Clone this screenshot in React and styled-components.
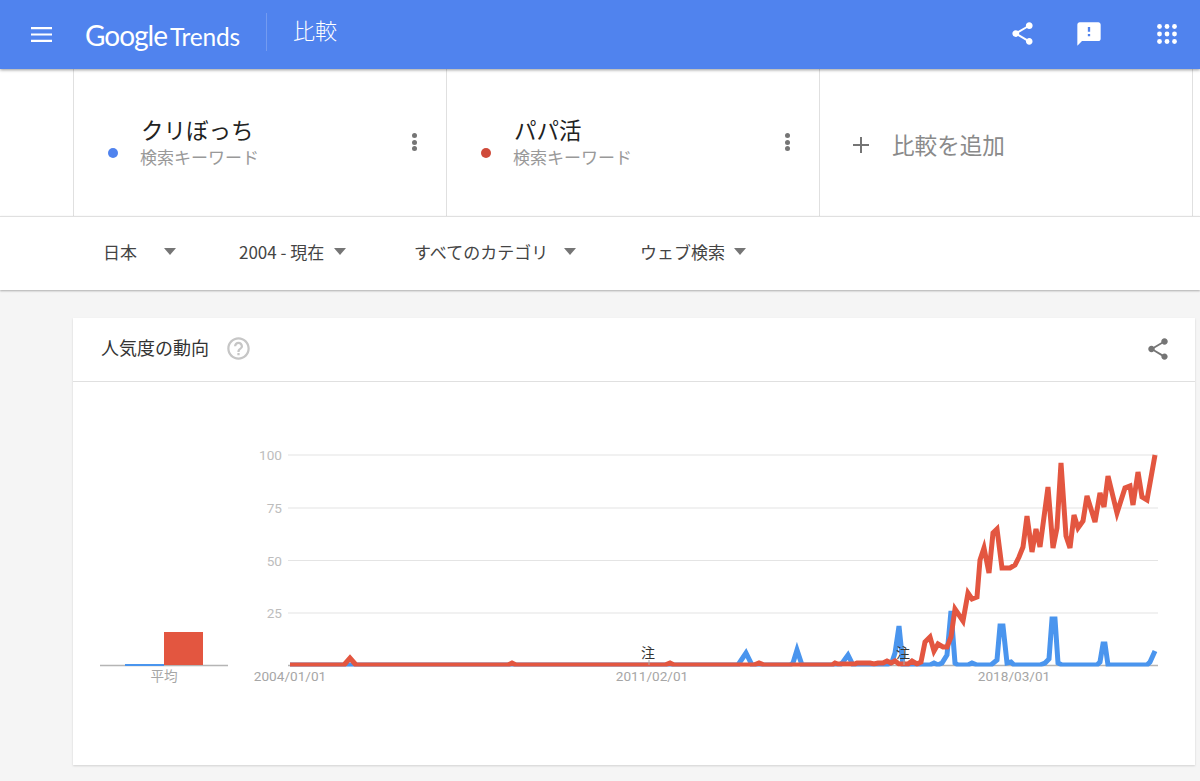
import styled, { createGlobalStyle } from "styled-components";

const GlobalStyle = createGlobalStyle`
  html, body {
    margin: 0;
    height: 100%;
    overflow: hidden;
    background: #f5f5f5;
    font-family: "Noto Sans CJK JP", Roboto, sans-serif;
  }
`;

const SHARE =
  "M18 16.08c-.76 0-1.44.3-1.96.77L8.91 12.7c.05-.23.09-.46.09-.7s-.04-.47-.09-.7l7.05-4.11c.54.5 1.25.81 2.04.81 1.66 0 3-1.34 3-3s-1.34-3-3-3-3 1.34-3 3c0 .24.04.47.09.7L8.04 9.81C7.5 9.31 6.79 9 6 9c-1.66 0-3 1.34-3 3s1.34 3 3 3c.79 0 1.5-.31 2.04-.81l7.12 4.16c-.05.21-.08.43-.08.65 0 1.61 1.31 2.92 2.92 2.92 1.61 0 2.92-1.31 2.92-2.92s-1.31-2.92-2.92-2.92z";
const FEEDBACK =
  "M20 2H4c-1.1 0-1.99.9-1.99 2L2 22l4-4h14c1.1 0 2-.9 2-2V4c0-1.1-.9-2-2-2zm-7 12h-2v-2h2v2zm0-4h-2V6h2v4z";
const HELP =
  "M11 18h2v-2h-2v2zm1-16C6.48 2 2 6.48 2 12s4.48 10 10 10 10-4.48 10-10S17.52 2 12 2zm0 18c-4.41 0-8-3.59-8-8s3.59-8 8-8 8 3.59 8 8-3.59 8-8 8zm0-14c-2.21 0-4 1.79-4 4h2c0-1.1.9-2 2-2s2 .9 2 2c0 2-3 1.75-3 5h2c0-2.25 3-2.5 3-5 0-2.21-1.79-4-4-4z";

const Header = styled.header`
  position: relative;
  z-index: 2;
  height: 69px;
  background: #5083ee;
  box-shadow: 0 1px 3px rgba(0, 0, 0, 0.4);
  display: flex;
  align-items: center;
  color: #fff;
`;

const Logo = styled.div`
  margin-left: 33px;
  width: 181px;
  flex: none;
  display: flex;
  align-items: baseline;
  gap: 3px;
`;

const LogoGoogle = styled.span`
  font-family: Lato, sans-serif;
  font-size: 28px;
  letter-spacing: -1px;
`;

const LogoTrends = styled.span`
  font-family: Lato, sans-serif;
  font-size: 24.5px;
  letter-spacing: -0.2px;
`;

const Divider = styled.div`
  width: 1px;
  height: 38px;
  margin-bottom: 5px;
  background: rgba(255, 255, 255, 0.2);
`;

const PageTitle = styled.div`
  margin: 0 0 12px 26px;
  font-size: 22px;
  font-weight: 300;
`;

const HeaderIcons = styled.div`
  margin: 0 23px 2px auto;
  display: flex;
  align-items: center;
`;

const Icon = styled.svg`
  display: block;
  fill: ${(p) => p.$color || "#fff"};
  flex: none;
  margin-left: ${(p) => p.$left || 0}px;
`;

const TermRow = styled.div`
  height: 147px;
  background: #fff;
  padding-left: 73px;
  display: grid;
  grid-template-columns: repeat(3, 373px);
`;

const TermCell = styled.div`
  position: relative;
  border-left: 1px solid #e0e0e0;
  display: flex;
  align-items: flex-start;
  &:last-child {
    border-right: 1px solid #e0e0e0;
    width: 374px;
    box-sizing: border-box;
  }
`;

const Dot = styled.span`
  width: 10px;
  height: 10px;
  border-radius: 50%;
  background: ${(p) => p.$color};
  margin: 79px 0 0 34px;
  flex: none;
`;

const TermText = styled.div`
  margin: 43px 0 0 23px;
  flex: 1;
`;

const TermName = styled.div`
  font-size: 22.5px;
  line-height: 34px;
  color: #222;
`;

const TermType = styled.div`
  margin: -1px 0 0 -1px;
  font-size: 17px;
  line-height: 24px;
  color: #999;
`;

const Kebab = styled.div`
  margin: 64px 29px 0 0;
  display: flex;
  flex-direction: column;
  gap: 1.5px;
`;

const KebabDot = styled.span`
  width: 5px;
  height: 5px;
  border-radius: 50%;
  background: #757575;
`;

const AddTerm = styled.div`
  display: flex;
  align-items: center;
  gap: 22px;
  margin: 60px 0 0 32px;
  font-size: 22.6px;
  line-height: 32px;
  color: #8a8a8a;
`;

const FilterBar = styled.div`
  position: relative;
  z-index: 1;
  height: 73px;
  background: #fff;
  border-top: 1px solid #e0e0e0;
  box-shadow: 0 1px 2px rgba(0, 0, 0, 0.3);
  padding-left: 103px;
  display: flex;
  align-items: center;
`;

const Filter = styled.div`
  width: ${(p) => p.$width}px;
  flex: none;
  display: flex;
  align-items: center;
  font-size: 17px;
  color: #444;
  margin-bottom: 5px;
`;

const Caret = styled.span`
  margin-left: ${(p) => p.$gap}px;
  width: 0;
  height: 0;
  border-left: 6.5px solid transparent;
  border-right: 6.5px solid transparent;
  border-top: 7px solid #757575;
`;

const Card = styled.section`
  margin: 28px 5px 0 73px;
  background: #fff;
  box-shadow: 0 1px 2px rgba(0, 0, 0, 0.15);
`;

const CardHeader = styled.div`
  height: 60px;
  border-bottom: 1px solid #e0e0e0;
  padding: 0 24px 3px 28px;
  display: flex;
  align-items: center;
`;

const CardTitle = styled.h2`
  margin: 0 15px 2px 0;
  font-size: 18px;
  font-weight: 400;
  color: #333;
`;

const CardShare = styled.div`
  margin: 2px 0 0 auto;
`;

const Chart = styled.svg`
  display: block;
  width: 1122px;
  height: 383px;
`;

const Grid = styled.line`
  stroke: #e4e4e4;
  stroke-width: 1.2;
`;

const Axis = styled.line`
  stroke: #b5b5b5;
  stroke-width: 1.4;
`;

const Label = styled.text`
  font-family: Roboto, "Noto Sans CJK JP", sans-serif;
  font-size: 13.6px;
  fill: ${(p) => p.$color || "#a6a6a6"};
`;

const Note = styled.text`
  font-family: "Noto Sans CJK JP", sans-serif;
  font-size: 14px;
  fill: #333;
`;

const Series = styled.polyline`
  fill: none;
  stroke: ${(p) => p.$color};
  stroke-width: 5;
  stroke-linejoin: miter;
`;

const blue =
  "290,665 738,665 746,653 752,665 790,665 793,663 797,650 802,665 840,665 843,662 848,655 853,665 887,665 892,662 895,653 899,626 903,665 930,665 934,663 938,665 942,663 947,655 951,611 955,663 958,665 968,665 972,663 977,665 991,665 997,660 1000,626 1003,626 1007,663 1011,662 1014,665 1040,665 1045,663 1049,659 1052,619 1055,619 1058,663 1062,665 1097,665 1100,662 1103,644 1105,644 1108,665 1147,665 1150,662 1155,651";

const red =
  "290,665 344,665 350,658 356,665 508,665 512,663 516,665 665,665 670,663 674,665 754,665 759,663 764,665 832,665 835,663 838,664 855,664 857,663 870,663 874,664 878,663 883,663 887,661 891,663 895,661 899,664 908,664 912,661 917,664 921,662 925,642 930,637 934,651 938,644 943,647 947,647 951,637 955,609 963,621 968,593 972,599 977,597 980,560 984,548 989,573 993,533 997,529 1002,568 1010,568 1015,565 1019,557 1023,547 1027,516 1032,552 1036,529 1040,547 1048,487 1053,548 1057,528 1061,463 1066,536 1070,548 1074,515 1078,528 1083,521 1087,496 1095,522 1100,493 1104,507 1108,476 1117,513 1125,488 1130,486 1133,505 1138,472 1142,497 1147,500 1155,455";

const gridLines = [
  { y: 455, label: "100" },
  { y: 508, label: "75" },
  { y: 560.5, label: "50" },
  { y: 613, label: "25" },
];

const dates = [
  { x: 290, label: "2004/01/01" },
  { x: 652, label: "2011/02/01" },
  { x: 1014, label: "2018/03/01" },
];

const notes = [648, 903];

const appDots = [0, 1, 2].flatMap((row) =>
  [0, 1, 2].map((col) => ({ cx: 2.5 + col * 7.5, cy: 2.5 + row * 7.5 }))
);

function ShareIcon({ size, color, left }) {
  return (
    <Icon width={size} height={size} viewBox="0 0 24 24" $color={color} $left={left}>
      <path d={SHARE} />
    </Icon>
  );
}

function Term({ name, color }) {
  return (
    <TermCell>
      <Dot $color={color} />
      <TermText>
        <TermName>{name}</TermName>
        <TermType>検索キーワード</TermType>
      </TermText>
      <Kebab>
        <KebabDot />
        <KebabDot />
        <KebabDot />
      </Kebab>
    </TermCell>
  );
}

export default function App() {
  return (
    <>
      <GlobalStyle />
      <Header>
        <Icon width="21" height="15" viewBox="0 0 21 15" $left={31}>
          <path d="M0 0h21v2.2H0zM0 6.4h21v2.2H0zM0 12.8h21V15H0z" />
        </Icon>
        <Logo>
          <LogoGoogle>Google</LogoGoogle>
          <LogoTrends>Trends</LogoTrends>
        </Logo>
        <Divider />
        <PageTitle>比較</PageTitle>
        <HeaderIcons>
          <ShareIcon size={27} />
          <Icon width="28" height="28" viewBox="0 0 24 24" $left={39}>
            <path d={FEEDBACK} />
          </Icon>
          <Icon width="20" height="20" viewBox="0 0 20 20" $left={54}>
            {appDots.map((d) => (
              <circle key={`${d.cx}-${d.cy}`} cx={d.cx} cy={d.cy} r="2.4" />
            ))}
          </Icon>
        </HeaderIcons>
      </Header>

      <TermRow>
        <Term name="クリぼっち" color="#5083ee" />
        <Term name="パパ活" color="#cf4a3a" />
        <TermCell>
          <AddTerm>
            <Icon width="18" height="18" viewBox="0 0 18 18" $color="#757575">
              <path d="M8 1h2v7h7v2h-7v7H8v-7H1V8h7z" />
            </Icon>
            比較を追加
          </AddTerm>
        </TermCell>
      </TermRow>

      <FilterBar>
        <Filter $width={136}>
          日本
          <Caret $gap={27} />
        </Filter>
        <Filter $width={175}>
          2004 - 現在
          <Caret $gap={10} />
        </Filter>
        <Filter $width={226}>
          すべてのカテゴリ
          <Caret $gap={16} />
        </Filter>
        <Filter $width={120}>
          ウェブ検索
          <Caret $gap={9} />
        </Filter>
      </FilterBar>

      <Card>
        <CardHeader>
          <CardTitle>人気度の動向</CardTitle>
          <Icon width="27" height="27" viewBox="0 0 24 24" $color="#c6c6c6" $left={1}>
            <path d={HELP} />
          </Icon>
          <CardShare>
            <ShareIcon size={26} color="#757575" />
          </CardShare>
        </CardHeader>
        <Chart viewBox="73 382 1122 383">
          <defs>
            <clipPath id="plot">
              <rect x="288" y="440" width="875" height="226.5" />
            </clipPath>
          </defs>
          {gridLines.map((g) => (
            <g key={g.label}>
              <Grid x1="288" x2="1158" y1={g.y} y2={g.y} />
              <Label x="282" y={g.y + 5} textAnchor="end" $color="#bdbdbd">
                {g.label}
              </Label>
            </g>
          ))}
          <Axis x1="288" x2="1158" y1="665.5" y2="665.5" />
          <Axis x1="100" x2="228" y1="665.5" y2="665.5" />

          <rect x="125" y="664" width="39" height="2" fill="#4a95ee" />
          <rect x="164" y="632" width="39" height="33" fill="#e35640" />
          <Label x="164" y="681" textAnchor="middle">
            平均
          </Label>

          <g clipPath="url(#plot)">
            <Series points={blue} $color="#4a95ee" />
            <Series points={red} $color="#e35640" />
          </g>

          {dates.map((d) => (
            <Label key={d.label} x={d.x} y="681" textAnchor="middle">
              {d.label}
            </Label>
          ))}
          {notes.map((x) => (
            <g key={x}>
              <Note x={x} y="658" textAnchor="middle">
                注
              </Note>
              <line x1={x + 1} x2={x + 1} y1="660" y2="665" stroke="#aaa" />
            </g>
          ))}
        </Chart>
      </Card>
    </>
  );
}
